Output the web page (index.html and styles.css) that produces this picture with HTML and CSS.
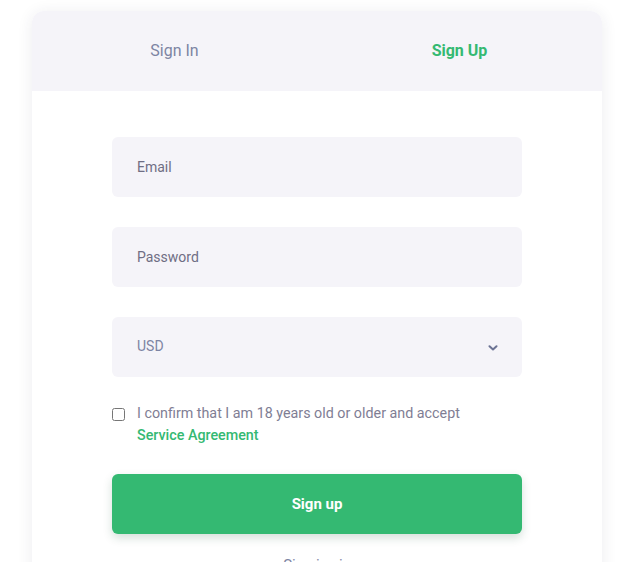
FILE: index.html
```html
<!DOCTYPE html>
<html lang="en">
<head>
    <meta charset="UTF-8">
    <meta name="viewport" content="width=device-width, initial-scale=1.0">
    <title>Sign Up</title>
    <link rel="stylesheet" href="styles.css">
</head>
<body>

    <div class="card">
        <div class="tabs">
            <a class="tab">Sign In</a>
            <a class="tab active">Sign Up</a>
        </div>

        <form class="form">
            <input type="email" class="field" placeholder="Email">
            <input type="password" class="field" placeholder="Password">
            <div class="field select">
                <span>USD</span>
                <svg class="chevron" width="10" height="6" viewBox="0 0 10 6">
                    <path d="M1.5 1.2 L5 4.5 L8.5 1.2" fill="none" stroke="#6c7394" stroke-width="2" stroke-linecap="round" stroke-linejoin="round"/>
                </svg>
            </div>

            <label class="agree">
                <input type="checkbox">
                <span>I confirm that I am 18 years old or older and accept <a class="link">Service Agreement</a></span>
            </label>

            <button type="button" class="btn">Sign up</button>

            <p class="alt">Sign in via</p>
        </form>
    </div>

</body>
</html>
```

FILE: styles.css
```css
body {
    font-family: Roboto, Arial, sans-serif;
    margin: 0;
    padding: 11px 0 0 32px;
    background: #ffffff;
}

.card {
    width: 570px;
    height: 600px;
    background: white;
    border-radius: 12px;
    box-shadow: 0px 2px 16px rgba(40, 40, 80, 0.09);
    overflow: hidden;
}

.tabs {
    display: flex;
    height: 79px;
    padding-bottom: 1px;
    background: #f5f4f9;
}

.tab {
    flex: 1;
    display: flex;
    justify-content: center;
    align-items: center;
    font-size: 16px;
    color: #7d84a3;
    cursor: pointer;
}

.tab.active {
    color: #34b972;
    font-weight: bold;
}

.form {
    display: flex;
    flex-direction: column;
    padding: 46px 80px 0;
}

.field {
    box-sizing: border-box;
    height: 60px;
    margin-bottom: 30px;
    padding: 0 25px;
    border: none;
    border-radius: 6px;
    background: #f5f4f9;
    font-family: inherit;
    font-size: 14px;
    color: #6b6a80;
    outline: none;
}

.field::placeholder {
    color: #6f6e84;
}

.select {
    display: flex;
    align-items: center;
    justify-content: space-between;
    color: #7d84a3;
    padding-right: 24px;
    margin-bottom: 25px;
}

.select span {
    margin-top: -2px;
}

.chevron {
    margin-top: 2px;
}

.agree {
    display: flex;
    align-items: flex-start;
    gap: 12px;
    font-size: 14.3px;
    line-height: 22px;
    color: #7f7e94;
}

.agree input {
    width: 13px;
    height: 13px;
    margin: 6px 0 0 0;
    flex-shrink: 0;
}

.link {
    display: block;
    color: #34b972;
    font-weight: 500;
}

.btn {
    margin-top: 28px;
    height: 60px;
    border: none;
    border-radius: 6px;
    background: #34b972;
    color: white;
    font-family: inherit;
    font-size: 15px;
    font-weight: bold;
    box-shadow: 0px 4px 10px rgba(20, 80, 50, 0.18);
    cursor: pointer;
}

.alt {
    margin: 22px 0 0;
    text-align: center;
    font-size: 15px;
    color: #7d84a3;
}
```
